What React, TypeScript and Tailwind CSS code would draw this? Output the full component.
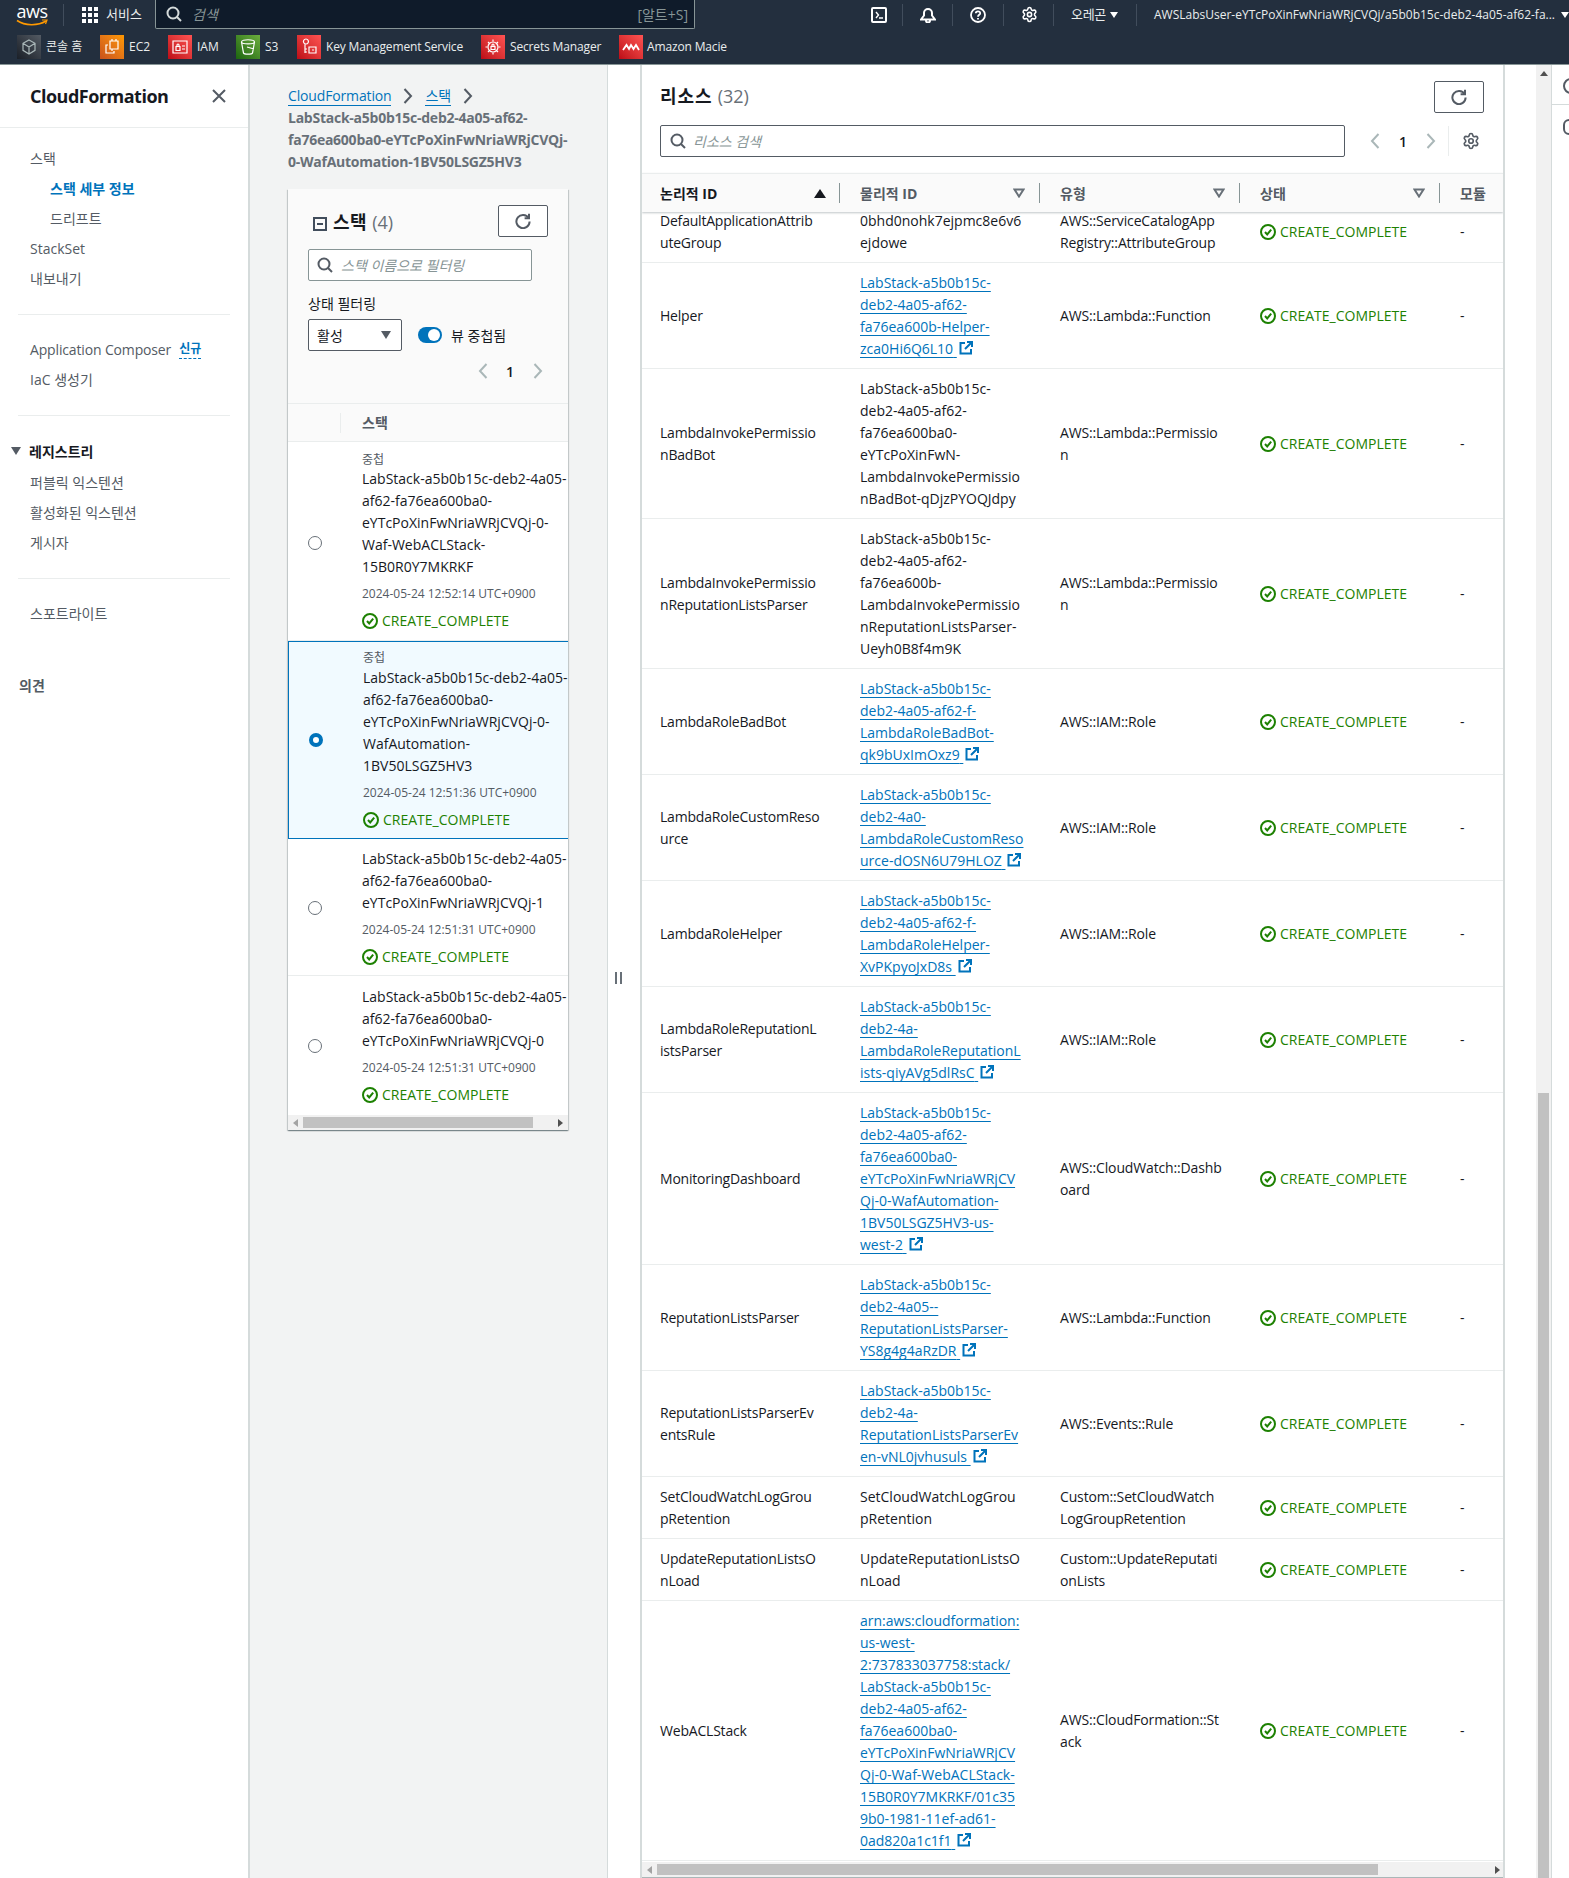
import type { ReactNode } from "react";
import { Settings } from "lucide-react";

const font = "font-['Open_Sans','Noto_Sans_CJK_KR',sans-serif]";

function CheckCircle() {
  return (
    <svg width="16" height="16" viewBox="0 0 16 16" fill="none" stroke="#1d8102" strokeWidth="2" className="shrink-0">
      <circle cx="8" cy="8" r="7" />
      <path d="M5 8l2.2 2.4L11.2 5.6" />
    </svg>
  );
}

function Status() {
  return (
    <span className="flex items-center gap-[4px] text-[14px] leading-[22px] text-[#1d8102]">
      <CheckCircle />
      CREATE_COMPLETE
    </span>
  );
}

function Refresh() {
  return (
    <svg width="16" height="16" viewBox="0 0 16 16" fill="none" stroke="#545b64" strokeWidth="2">
      <path d="M13.6 5A6.6 6.6 0 1 0 14.6 8.5" />
      <path d="M14 .8V5.2H9.6" />
    </svg>
  );
}

function Search() {
  return (
    <svg width="16" height="16" viewBox="0 0 16 16" fill="none" stroke="#545b64" strokeWidth="2" className="shrink-0">
      <circle cx="7" cy="7" r="5.5" />
      <path d="M11 11l4 4" />
    </svg>
  );
}

function Chevron({ dir, color = "#aab7b8" }: { dir: "l" | "r"; color?: string }) {
  return (
    <svg width="10" height="16" viewBox="0 0 10 16" fill="none" stroke={color} strokeWidth="2">
      <path d={dir === "l" ? "M8.500 1L2 8l6.500 7" : "M1.500 1L8 8l-6.500 7"} />
    </svg>
  );
}

function SortHollow() {
  return (
    <svg width="12" height="10" viewBox="0 0 12 10" fill="none" stroke="#687078" strokeWidth="2">
      <path d="M1.500 1.500h9L6 8.500z" />
    </svg>
  );
}

function External() {
  return (
    <svg width="14" height="14" viewBox="0 0 14 14" fill="none" stroke="#0073bb" strokeWidth="2" className="ml-[2px] inline-block align-[-1px]">
      <path d="M6 2H1.500v10.500H12V8" />
      <path d="M8 1h5v5M13 1L6 8" />
    </svg>
  );
}

function Tile({ className, children }: { className: string; children: ReactNode }) {
  return (
    <span className={`flex h-[24px] w-[24px] shrink-0 items-center justify-center ${className}`}>
      <svg width="18" height="18" viewBox="0 0 18 18" fill="none" stroke="white" strokeWidth="1.200">
        {children}
      </svg>
    </span>
  );
}

function Sep({ className = "" }: { className?: string }) {
  return <span className={`h-[22px] w-px shrink-0 bg-[#414d5c] ${className}`} />;
}

function Header() {
  return (
    <header className="h-[65px] shrink-0 border-b border-[#879596] bg-[#232f3e] text-white">
      <div className="flex h-[29px] items-center">
        <div className="ml-[16px] flex w-[33px] flex-col items-center">
          <span className="text-[18px] leading-[17px] font-medium tracking-[-0.5px]">aws</span>
          <svg width="32" height="8" viewBox="0 0 32 8" fill="none" className="-mt-[1px]">
            <path d="M1 1.500C9 7 22 7 30 2" stroke="#f90" strokeWidth="1.600" />
            <path d="M26 1h5l-1.500 4" stroke="#f90" strokeWidth="1.200" />
          </svg>
        </div>
        <Sep className="ml-[15px]" />
        <div className="ml-[18px] grid shrink-0 grid-cols-3 gap-[2px]">
          {Array.from({ length: 9 }).map((_, i) => (
            <span key={i} className="h-[4px] w-[4px] bg-white" />
          ))}
        </div>
        <span className="ml-[8px] w-[36px] shrink-0 text-[13px] whitespace-nowrap text-[#eaeded]">서비스</span>
        <div className="ml-[13px] flex h-[29px] w-[540px] shrink-0 items-center rounded-br-[2px] rounded-bl-[2px] border-r border-b border-l border-[#879596] bg-[#0f1b2a] pr-[6px] pl-[10px]">
          <Search2 />
          <span className="ml-[10px] text-[14px] text-[#879596] italic">검색</span>
          <span className="ml-auto text-[14px] text-[#879596]">[알트+S]</span>
        </div>
        <span className="ml-[176px] flex h-[16px] w-[16px] shrink-0 items-center justify-center rounded-[2px] border-2 border-white">
          <svg width="8" height="8" viewBox="0 0 8 8" fill="none" stroke="white" strokeWidth="1.400">
            <path d="M1 1l2.500 3L1 7M4 7h4" />
          </svg>
        </span>
        <Sep className="ml-[15px]" />
        <svg width="16" height="16" viewBox="0 0 16 16" fill="none" stroke="white" strokeWidth="2" className="ml-[17px] shrink-0">
          <path d="M1 12.500h14L12 8.500V6a4 4 0 0 0-8 0v2.500zM6 13.500a2 2 0 0 0 4 0" />
        </svg>
        <Sep className="ml-[16px]" />
        <svg width="16" height="16" viewBox="0 0 16 16" fill="none" stroke="white" strokeWidth="1.800" className="ml-[17px] shrink-0">
          <circle cx="8" cy="8" r="7" />
          <path d="M5.800 6.300C5.800 3.800 10.200 3.800 10.200 6.200 10.200 7.800 8 7.800 8 9.700M8 11v1.500" />
        </svg>
        <Sep className="ml-[17px]" />
        <Settings size={17} color="white" strokeWidth={2.2} className="ml-[17px] shrink-0" />
        <Sep className="ml-[15px]" />
        <span className="ml-[17px] w-[35px] shrink-0 text-[13px] tracking-[-0.3px] whitespace-nowrap text-[#eaeded]">오레곤</span>
        <span className="ml-[4px] h-0 w-0 shrink-0 border-x-[4px] border-t-[6px] border-x-transparent border-t-white" />
        <Sep className="ml-[18px]" />
        <span className="ml-[17px] w-[405px] shrink-0 text-[12px] whitespace-nowrap text-[#eaeded]">AWSLabsUser-eYTcPoXinFwNriaWRjCVQj/a5b0b15c-deb2-4a05-af62-fa...</span>
        <span className="ml-[2px] h-0 w-0 shrink-0 border-x-[4px] border-t-[6px] border-x-transparent border-t-white" />
      </div>
      <div className="flex h-[35px] items-center pl-[17px] text-[12px] whitespace-nowrap text-[#eaeded]">
        <Tile className="bg-linear-to-tr from-[#1b2028] to-[#545b64]">
          <path d="M9 2l6 3.300v7L9 16l-6-3.700v-7zM3 5.300L9 9l6-3.700M9 9v7" stroke="#aab7b8" />
        </Tile>
        <span className="ml-[5px] w-[54px]">콘솔 홈</span>
        <Tile className="bg-linear-to-tr from-[#c8511b] to-[#f90]">
          <path d="M7 3h8v8H7zM5 7H3v8h8v-2M9 1v2M13 1v2M9 11v2" />
        </Tile>
        <span className="ml-[5px] w-[39px]">EC2</span>
        <Tile className="bg-linear-to-tr from-[#bd0816] to-[#ff5252]">
          <path d="M2 3h14v12H2zM5 8.500h4v4H5zM6 8.500V7a1 1 0 0 1 2 0v1.500M11 8h3M11 11h3" />
        </Tile>
        <span className="ml-[5px] w-[39px]">IAM</span>
        <Tile className="bg-linear-to-tr from-[#1b660f] to-[#6cae3e]">
          <path d="M2.500 4c0-3 13-3 13 0l-2 11c-.500 1.500-8.500 1.500-9 0zM2.500 4c0 2.500 13 2.500 13 0M8 9l7 2" />
        </Tile>
        <span className="ml-[5px] w-[32px]">S3</span>
        <Tile className="bg-linear-to-tr from-[#bd0816] to-[#ff5252]">
          <path d="M6 6a2.500 2.500 0 1 0-.1 0zM5 6v9M5 11h2M5 14h2M9 9h7v6H9zM12 12h2" />
        </Tile>
        <span className="ml-[5px] w-[155px] tracking-[-0.15px]">Key Management Service</span>
        <Tile className="bg-linear-to-tr from-[#bd0816] to-[#ff5252]">
          <path d="M9 1.500v2M9 14.500v2M1.500 9h2M14.500 9h2M4 4l1.500 1.500M12.500 12.500L14 14M4 14l1.500-1.500M12.500 5.500L14 4" />
          <circle cx="9" cy="9" r="5" />
          <path d="M7 8.500h4v3H7zM8 8.500V7a1 1 0 0 1 2 0v1.500" />
        </Tile>
        <span className="ml-[5px] w-[109px] tracking-[-0.15px]">Secrets Manager</span>
        <Tile className="bg-linear-to-tr from-[#bd0816] to-[#ff5252]">
          <path d="M1 12l3.500-5L7 11l2-4 2.500 4L14 7l3 5" strokeWidth="1.800" />
        </Tile>
        <span className="ml-[4px] tracking-[-0.15px]">Amazon Macie</span>
      </div>
    </header>
  );
}

function Search2() {
  return (
    <svg width="16" height="16" viewBox="0 0 16 16" fill="none" stroke="#d5dbdb" strokeWidth="2" className="shrink-0">
      <circle cx="7" cy="7" r="5.500" />
      <path d="M11 11l4 4" />
    </svg>
  );
}

function NavItem({ children, sub, active }: { children: ReactNode; sub?: boolean; active?: boolean }) {
  return (
    <div className={`flex h-[30px] items-center text-[14px] ${sub ? "pl-[50px]" : "pl-[30px]"} ${active ? "font-bold text-[#0073bb]" : "text-[#545b64]"}`}>
      {children}
    </div>
  );
}

function Divider({ className }: { className: string }) {
  return <div className={`mx-[18px] h-px bg-[#eaeded] ${className}`} />;
}

function Sidebar() {
  return (
    <aside className="w-[250px] shrink-0 border-r-2 border-[#d5dbdb] bg-white">
      <div className="flex h-[63px] items-center justify-between border-b border-[#eaeded] pr-[22px] pl-[30px]">
        <span className="text-[18px] font-bold tracking-[-0.5px] text-[#16191f]">CloudFormation</span>
        <svg width="14" height="14" viewBox="0 0 14 14" fill="none" stroke="#545b64" strokeWidth="2">
          <path d="M1 1l12 12M13 1L1 13" />
        </svg>
      </div>
      <div className="pt-[15px]">
        <NavItem>스택</NavItem>
        <NavItem sub active>스택 세부 정보</NavItem>
        <NavItem sub>드리프트</NavItem>
        <NavItem>StackSet</NavItem>
        <NavItem>내보내기</NavItem>
        <Divider className="mt-[21px]" />
        <div className="mt-[19px]" />
        <NavItem>
          <span className="tracking-[-0.15px]">Application Composer</span>
          <span className="ml-[8px] border-b border-dashed border-[#0073bb] text-[12px] leading-[18px] font-bold text-[#0073bb]">신규</span>
        </NavItem>
        <NavItem>IaC 생성기</NavItem>
        <Divider className="mt-[21px]" />
        <div className="mt-[20px] flex h-[30px] items-center pl-[11px] text-[14px] font-bold text-[#16191f]">
          <span className="h-0 w-0 border-x-[5px] border-t-[8px] border-x-transparent border-t-[#545b64]" />
          <span className="ml-[8px]">레지스트리</span>
        </div>
        <div className="mt-px" />
        <NavItem>퍼블릭 익스텐션</NavItem>
        <NavItem>활성화된 익스텐션</NavItem>
        <NavItem>게시자</NavItem>
        <Divider className="mt-[21px]" />
        <div className="mt-[19px]" />
        <NavItem>스포트라이트</NavItem>
        <div className="mt-[42px] flex h-[30px] items-center pl-[19px] text-[14px] font-bold text-[#545b64]">의견</div>
      </div>
    </aside>
  );
}

const stacks = [
  { nested: true, lines: ["LabStack-a5b0b15c-deb2-4a05-", "af62-fa76ea600ba0-", "eYTcPoXinFwNriaWRjCVQj-0-", "Waf-WebACLStack-", "15B0R0Y7MKRKF"], date: "2024-05-24 12:52:14 UTC+0900", rowClass: "h-[199px] border-b border-[#eaeded]", bodyClass: "pt-[9px]", radioClass: "mt-[3px]", labelClass: "h-[17px]" },
  { nested: true, selected: true, lines: ["LabStack-a5b0b15c-deb2-4a05-", "af62-fa76ea600ba0-", "eYTcPoXinFwNriaWRjCVQj-0-", "WafAutomation-", "1BV50LSGZ5HV3"], date: "2024-05-24 12:51:36 UTC+0900", rowClass: "h-[198px] border-y border-l border-[#0073bb] bg-[#f1faff]", bodyClass: "pt-[7px]", radioClass: "", labelClass: "h-[18px]" },
  { lines: ["LabStack-a5b0b15c-deb2-4a05-", "af62-fa76ea600ba0-", "eYTcPoXinFwNriaWRjCVQj-1"], date: "2024-05-24 12:51:31 UTC+0900", rowClass: "h-[137px] border-b border-[#eaeded]", bodyClass: "pt-[9px]", radioClass: "mt-[1px]", labelClass: "" },
  { lines: ["LabStack-a5b0b15c-deb2-4a05-", "af62-fa76ea600ba0-", "eYTcPoXinFwNriaWRjCVQj-0"], date: "2024-05-24 12:51:31 UTC+0900", rowClass: "h-[139px]", bodyClass: "pt-[10px]", radioClass: "", labelClass: "" },
];

function StackRow({ s }: { s: (typeof stacks)[number] }) {
  return (
    <div className={`flex items-center overflow-hidden ${s.rowClass}`}>
      <div className={`flex w-[74px] shrink-0 justify-center pr-[20px] ${s.radioClass}`}>
        {s.selected ? (
          <span className="h-[14px] w-[14px] rounded-full border-[4px] border-[#0073bb] bg-white" />
        ) : (
          <span className="h-[14px] w-[14px] rounded-full border-[1.5px] border-[#687078] bg-white" />
        )}
      </div>
      <div className={`self-start whitespace-nowrap ${s.bodyClass}`}>
        {s.nested && <div className={`text-[12px] leading-[18px] text-[#545b64] ${s.labelClass}`}>중첩</div>}
        {s.lines.map((l) => (
          <div key={l} className="text-[14px] leading-[22px] text-[#16191f]">{l}</div>
        ))}
        <div className="mt-[5px] text-[12px] leading-[22px] text-[#545b64]">{s.date}</div>
        <div className="mt-[5px]">
          <Status />
        </div>
      </div>
    </div>
  );
}

const cardShadow = "shadow-[0_1px_1px_0_rgba(0,28,36,0.3),1px_1px_1px_0_rgba(0,28,36,0.15),-1px_1px_1px_0_rgba(0,28,36,0.15)]";

function StackColumn() {
  return (
    <section className="w-[357px] shrink-0 bg-[#f2f3f3] pt-[20px] pl-[38px]">
      <div className="flex h-[22px] items-center text-[14px] text-[#0073bb]">
        <span className="border-b border-[#0073bb] leading-[19px] tracking-[-0.15px]">CloudFormation</span>
        <span className="mx-[12px]"><Chevron dir="r" color="#545b64" /></span>
        <span className="border-b border-[#0073bb] leading-[19px]">스택</span>
        <span className="ml-[12px]"><Chevron dir="r" color="#545b64" /></span>
      </div>
      <div className="text-[14px] leading-[22px] font-bold tracking-[-0.25px] whitespace-nowrap text-[#687078]">
        <div>LabStack-a5b0b15c-deb2-4a05-af62-</div>
        <div>fa76ea600ba0-eYTcPoXinFwNriaWRjCVQj-</div>
        <div>0-WafAutomation-1BV50LSGZ5HV3</div>
      </div>
      <div className={`mt-[16px] h-[941px] w-[280px] overflow-hidden bg-white ${cardShadow}`}>
        <div className="h-[214px] bg-[#fafafa] pt-[16px] pl-[20px]">
          <div className="flex h-[32px] items-center justify-between pr-[20px]">
            <div className="mt-[2px] flex items-center pl-[5px]">
              <span className="mt-[3px] flex h-[14px] w-[14px] items-center justify-center border-2 border-[#414d5c]">
                <span className="h-[2px] w-[6px] bg-[#414d5c]" />
              </span>
              <span className="ml-[6px] text-[18px] font-bold tracking-[0.5px] text-[#16191f]">스택</span>
              <span className="ml-[5px] text-[18px] text-[#687078]">(4)</span>
            </div>
            <span className="flex h-[32px] w-[50px] items-center justify-center rounded-[2px] border border-[#545b64] bg-white">
              <Refresh />
            </span>
          </div>
          <div className="mt-[12px] flex h-[32px] w-[224px] items-center rounded-[2px] border border-[#879596] bg-white pl-[8px]">
            <Search />
            <span className="ml-[8px] text-[14px] text-[#879596] italic">스택 이름으로 필터링</span>
          </div>
          <div className="mt-[12px] h-[22px] text-[14px] leading-[22px] text-[#16191f]">상태 필터링</div>
          <div className="mt-[4px] flex items-center">
            <span className="flex h-[32px] w-[94px] items-center justify-between rounded-[2px] border border-[#545b64] bg-white pr-[10px] pl-[8px] text-[14px] text-[#16191f]">
              활성
              <span className="h-0 w-0 border-x-[5px] border-t-[8px] border-x-transparent border-t-[#545b64]" />
            </span>
            <span className="ml-[16px] flex h-[16px] w-[24px] items-center justify-end rounded-full bg-[#0073bb] pr-[2px]">
              <span className="h-[12px] w-[12px] rounded-full bg-white" />
            </span>
            <span className="ml-[9px] text-[14px] text-[#16191f]">뷰 중첩됨</span>
          </div>
          <div className="mt-[12px] flex h-[16px] items-center pl-[170px]">
            <Chevron dir="l" />
            <span className="ml-[17px] w-[10px] text-center text-[14px] font-semibold text-[#16191f]">1</span>
            <span className="ml-[18px]"><Chevron dir="r" /></span>
          </div>
        </div>
        <div className="flex h-[39px] items-center border-y border-[#eaeded] bg-[#fafafa]">
          <span className="ml-[52px] h-[20px] w-px bg-[#eaeded]" />
          <span className="ml-[21px] text-[14px] font-bold text-[#545b64]">스택</span>
        </div>
        {stacks.map((s) => (
          <StackRow key={s.date + s.lines[4]} s={s} />
        ))}
        <div className="flex h-[15px] items-center bg-[#f1f1f1]">
          <span className="ml-[5px] h-0 w-0 border-y-[4px] border-r-[5px] border-y-transparent border-r-[#a3a3a3]" />
          <span className="ml-[5px] h-[11px] w-[230px] bg-[#c1c1c1]" />
          <span className="ml-[25px] h-0 w-0 border-y-[4px] border-l-[5px] border-y-transparent border-l-[#505050]" />
        </div>
      </div>
    </section>
  );
}

const resources: { name: string[]; phys: string[]; link?: boolean; type: string[] }[] = [
  { name: ["DefaultApplicationAttrib", "uteGroup"], phys: ["0bhd0nohk7ejpmc8e6v6", "ejdowe"], type: ["AWS::ServiceCatalogApp", "Registry::AttributeGroup"] },
  { name: ["Helper"], link: true, phys: ["LabStack-a5b0b15c-", "deb2-4a05-af62-", "fa76ea600b-Helper-", "zca0Hi6Q6L10"], type: ["AWS::Lambda::Function"] },
  { name: ["LambdaInvokePermissio", "nBadBot"], phys: ["LabStack-a5b0b15c-", "deb2-4a05-af62-", "fa76ea600ba0-", "eYTcPoXinFwN-", "LambdaInvokePermissio", "nBadBot-qDjzPYOQJdpy"], type: ["AWS::Lambda::Permissio", "n"] },
  { name: ["LambdaInvokePermissio", "nReputationListsParser"], phys: ["LabStack-a5b0b15c-", "deb2-4a05-af62-", "fa76ea600b-", "LambdaInvokePermissio", "nReputationListsParser-", "Ueyh0B8f4m9K"], type: ["AWS::Lambda::Permissio", "n"] },
  { name: ["LambdaRoleBadBot"], link: true, phys: ["LabStack-a5b0b15c-", "deb2-4a05-af62-f-", "LambdaRoleBadBot-", "qk9bUxImOxz9"], type: ["AWS::IAM::Role"] },
  { name: ["LambdaRoleCustomReso", "urce"], link: true, phys: ["LabStack-a5b0b15c-", "deb2-4a0-", "LambdaRoleCustomReso", "urce-dOSN6U79HLOZ"], type: ["AWS::IAM::Role"] },
  { name: ["LambdaRoleHelper"], link: true, phys: ["LabStack-a5b0b15c-", "deb2-4a05-af62-f-", "LambdaRoleHelper-", "XvPKpyoJxD8s"], type: ["AWS::IAM::Role"] },
  { name: ["LambdaRoleReputationL", "istsParser"], link: true, phys: ["LabStack-a5b0b15c-", "deb2-4a-", "LambdaRoleReputationL", "ists-qiyAVg5dlRsC"], type: ["AWS::IAM::Role"] },
  { name: ["MonitoringDashboard"], link: true, phys: ["LabStack-a5b0b15c-", "deb2-4a05-af62-", "fa76ea600ba0-", "eYTcPoXinFwNriaWRjCV", "Qj-0-WafAutomation-", "1BV50LSGZ5HV3-us-", "west-2"], type: ["AWS::CloudWatch::Dashb", "oard"] },
  { name: ["ReputationListsParser"], link: true, phys: ["LabStack-a5b0b15c-", "deb2-4a05--", "ReputationListsParser-", "YS8g4g4aRzDR"], type: ["AWS::Lambda::Function"] },
  { name: ["ReputationListsParserEv", "entsRule"], link: true, phys: ["LabStack-a5b0b15c-", "deb2-4a-", "ReputationListsParserEv", "en-vNL0jvhusuls"], type: ["AWS::Events::Rule"] },
  { name: ["SetCloudWatchLogGrou", "pRetention"], phys: ["SetCloudWatchLogGrou", "pRetention"], type: ["Custom::SetCloudWatch", "LogGroupRetention"] },
  { name: ["UpdateReputationListsO", "nLoad"], phys: ["UpdateReputationListsO", "nLoad"], type: ["Custom::UpdateReputati", "onLists"] },
  { name: ["WebACLStack"], link: true, phys: ["arn:aws:cloudformation:", "us-west-", "2:737833037758:stack/", "LabStack-a5b0b15c-", "deb2-4a05-af62-", "fa76ea600ba0-", "eYTcPoXinFwNriaWRjCV", "Qj-0-Waf-WebACLStack-", "15B0R0Y7MKRKF/01c35", "9b0-1981-11ef-ad61-", "0ad820a1c1f1"], type: ["AWS::CloudFormation::St", "ack"] },
];

function Lines({ lines }: { lines: string[] }) {
  return (
    <>
      {lines.map((l) => (
        <div key={l} className="whitespace-nowrap">{l}</div>
      ))}
    </>
  );
}

function PhysLink({ lines }: { lines: string[] }) {
  return (
    <>
      {lines.map((l, i) => (
        <div key={l} className="whitespace-nowrap">
          <span className="text-[#0073bb] underline underline-offset-[3px]">{l}{i === lines.length - 1 ? "\u00a0" : ""}</span>
          {i === lines.length - 1 && <External />}
        </div>
      ))}
    </>
  );
}

function ResourceRow({ r }: { r: (typeof resources)[number] }) {
  return (
    <div className="flex items-center border-b border-[#eaeded] pt-[9px] pb-[8px] text-[14px] leading-[22px] text-[#16191f]">
      <div className="w-[198px] shrink-0 pl-[18px] tracking-[-0.2px]"><Lines lines={r.name} /></div>
      <div className="w-[200px] shrink-0 pl-[20px]">{r.link ? <PhysLink lines={r.phys} /> : <Lines lines={r.phys} />}</div>
      <div className="w-[200px] shrink-0 pl-[20px] tracking-[-0.15px]"><Lines lines={r.type} /></div>
      <div className="w-[200px] shrink-0 pl-[20px]"><Status /></div>
      <div className="pl-[20px]">-</div>
    </div>
  );
}

function HeadCell({ label, width, sorted }: { label: string; width: string; sorted?: boolean }) {
  return (
    <div className={`flex h-[20px] shrink-0 items-center justify-between border-r border-[#879596] ${sorted ? "pr-[13px]" : "pr-[14px]"} ${width}`}>
      <span className={`text-[14px] font-bold ${sorted ? "text-[#16191f]" : "text-[#545b64]"}`}>{label}</span>
      {sorted ? <span className="h-0 w-0 border-x-[6px] border-b-[9px] border-x-transparent border-b-[#16191f]" /> : <SortHollow />}
    </div>
  );
}

function ResourcePanel() {
  return (
    <section className="flex w-[865px] shrink-0 flex-col overflow-hidden border-x-2 border-[#d5dbdb] bg-white">
      <div className="flex h-[108px] shrink-0 flex-col pt-[16px] pr-[19px] pl-[18px]">
        <div className="flex h-[32px] items-center justify-between">
          <div className="-mt-[2px] text-[18px]">
            <span className="font-bold tracking-[1px] text-[#16191f]">리소스</span>
            <span className="ml-[5px] text-[#687078]">(32)</span>
          </div>
          <span className="flex h-[32px] w-[50px] items-center justify-center rounded-[2px] border border-[#545b64] bg-white">
            <Refresh />
          </span>
        </div>
        <div className="mt-[12px] flex items-center">
          <div className="flex h-[32px] w-[685px] items-center rounded-[2px] border border-[#545b64] pl-[9px]">
            <Search />
            <span className="ml-[7px] text-[14px] text-[#879596] italic">리소스 검색</span>
          </div>
          <span className="ml-[25px]"><Chevron dir="l" /></span>
          <span className="ml-[18px] w-[10px] text-center text-[14px] font-semibold text-[#16191f]">1</span>
          <span className="ml-[18px]"><Chevron dir="r" /></span>
          <span className="ml-[12px] h-[30px] w-px bg-[#eaeded]" />
          <Settings size={18} color="#545b64" strokeWidth={2.2} className="ml-[13px]" />
        </div>
      </div>
      <div className="z-10 flex h-[39px] shrink-0 items-center border-t border-[#eaeded] bg-[#fafafa] pl-[18px] shadow-[0_1px_2px_rgba(0,28,36,0.25)]">
        <HeadCell label="논리적 ID" width="w-[180px]" sorted />
        <div className="w-[20px] shrink-0" />
        <HeadCell label="물리적 ID" width="w-[180px]" />
        <div className="w-[20px] shrink-0" />
        <HeadCell label="유형" width="w-[180px]" />
        <div className="w-[20px] shrink-0" />
        <HeadCell label="상태" width="w-[180px]" />
        <span className="ml-[20px] text-[14px] font-bold text-[#545b64]">모듈</span>
      </div>
      <div className="min-h-0 flex-1 overflow-hidden">
        <div className="-mt-[11px]">
          {resources.map((r) => (
            <ResourceRow key={r.name.join("")} r={r} />
          ))}
        </div>
      </div>
      <div className="flex h-[15px] shrink-0 items-center bg-[#f1f1f1]">
        <span className="ml-[5px] h-0 w-0 border-y-[4px] border-r-[5px] border-y-transparent border-r-[#a3a3a3]" />
        <span className="ml-[5px] h-[11px] w-[721px] bg-[#c1c1c1]" />
        <span className="ml-[117px] h-0 w-0 border-y-[4px] border-l-[5px] border-y-transparent border-l-[#505050]" />
      </div>
      <div className="h-[1px] shrink-0 bg-[#aab7b8]" />
    </section>
  );
}

export default function App() {
  return (
    <div className={`flex h-[1878px] w-[1569px] flex-col overflow-hidden bg-white ${font}`}>
      <Header />
      <div className="flex min-h-0 flex-1">
        <Sidebar />
        <StackColumn />
        <div className="flex w-[33px] shrink-0 items-center justify-center border-l border-[#d5dbdb] bg-white pt-[13px] pr-[12px]">
          <span className="flex gap-[3px]">
            <span className="h-[12px] w-[2px] bg-[#687078]" />
            <span className="h-[12px] w-[2px] bg-[#687078]" />
          </span>
        </div>
        <div className="flex min-h-0">
          <ResourcePanel />
        </div>
        <div className="w-[31px] shrink-0 bg-white" />
        <div className="flex w-[15px] shrink-0 flex-col items-center bg-[#f1f1f1]">
          <span className="mt-[6px] h-0 w-0 border-x-[4px] border-b-[5px] border-x-transparent border-b-[#505050]" />
          <span className="mt-[1017px] h-[785px] w-[11px] bg-[#c1c1c1]" />
        </div>
        <div className="flex-1 border-l border-[#d5dbdb] bg-white">
          <div className="h-[40px] overflow-hidden border-b border-[#d5dbdb] pt-[13px] pl-[11px]">
            <span className="block h-[16px] w-[16px] rounded-full border-2 border-[#545b64]" />
          </div>
          <div className="overflow-hidden pt-[14px] pl-[11px]">
            <span className="block h-[16px] w-[16px] rounded-[6px] border-2 border-[#545b64]" />
          </div>
        </div>
      </div>
    </div>
  );
}
